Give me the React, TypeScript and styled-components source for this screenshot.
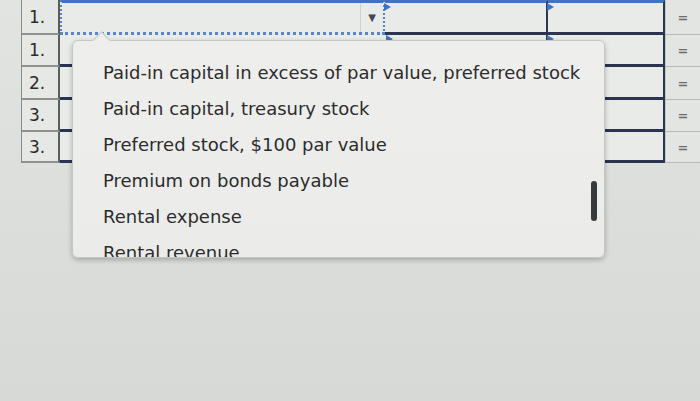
import React from 'react';
import styled, { createGlobalStyle, css } from 'styled-components';

const GlobalStyle = createGlobalStyle`
  html, body {
    margin: 0;
    padding: 0;
  }
  body {
    font-family: "DejaVu Sans", Verdana, sans-serif;
  }
`;

const NAVY = '#2b3450';
const BLUE = '#3f74c0';

const Page = styled.div`
  position: relative;
  width: 700px;
  height: 401px;
  overflow: hidden;
  background: linear-gradient(180deg, #e2e4e2 0%, #dcdfdc 45%, #d6d9d6 100%);
`;

const Sheet = styled.div`
  display: flex;
  flex-direction: column;
`;

const Row = styled.div<{ $h: number }>`
  display: grid;
  grid-template-columns: 22px 38px 325px 163px 117px 35px;
  height: ${(p) => p.$h}px;
`;

const Gutter = styled.div`
  border-right: 1px solid #8a8c8a;
`;

const NumCell = styled.div`
  display: flex;
  align-items: center;
  padding-left: 7px;
  background: #e6e8e6;
  border-bottom: 2px solid #8f918f;
  border-right: 2px solid #5a5c5e;
  font-size: 17px;
  color: #2a2a2a;
`;

const Cell = styled.div<{ $first?: boolean; $focus?: boolean; $edge?: boolean }>`
  position: relative;
  background: #e9ebe9;
  ${(p) =>
    p.$first
      ? css`
          border-top: 3px solid ${BLUE};
          border-bottom: 3px solid ${NAVY};
        `
      : css`
          border-bottom: 3px solid ${NAVY};
        `}
  ${(p) =>
    p.$focus &&
    css`
      border-left: 2px dotted #5b83c6;
      border-right: 2px dotted #5b83c6;
      border-bottom: 3px dotted #5b83c6;
      display: flex;
      justify-content: flex-end;
    `}
  ${(p) =>
    p.$edge &&
    css`
      border-right: 2px solid ${NAVY};
    `}
`;

const SplitCell = styled(Cell)`
  border-right: 2px solid ${NAVY};
`;

const ArrowBox = styled.div`
  width: 22px;
  display: flex;
  align-items: center;
  justify-content: center;
  border-left: 1px solid #cfd1cf;
  color: #445;
  font-size: 10px;
`;

const Marker = styled.span<{ $top?: boolean }>`
  position: absolute;
  right: -8px;
  ${(p) => (p.$top ? 'top: 0;' : 'bottom: -8px;')}
  width: 0;
  height: 0;
  border-top: 4px solid transparent;
  border-bottom: 4px solid transparent;
  border-left: 7px solid ${BLUE};
  z-index: 2;
`;

const EqCell = styled.div`
  display: flex;
  align-items: center;
  justify-content: center;
  background: #e3e5e3;
  border-bottom: 1px solid #b8bab8;
  border-left: 1px solid #c6c8c6;
  color: #6b6d6f;
  font-size: 13px;
  font-weight: bold;
`;

const Menu = styled.div`
  position: absolute;
  left: 72px;
  top: 40px;
  width: 533px;
  height: 218px;
  box-sizing: border-box;
  padding-top: 13px;
  background: linear-gradient(180deg, #eeeeec 0%, #ebebe9 100%);
  border: 1px solid #c5c7c5;
  border-radius: 6px;
  box-shadow: 0 2px 5px rgba(0, 0, 0, 0.25);
  z-index: 5;

  &::before {
    content: '';
    position: absolute;
    top: -7px;
    left: 22px;
    width: 12px;
    height: 12px;
    background: #eeeeec;
    border-left: 1px solid #c5c7c5;
    border-top: 1px solid #c5c7c5;
    transform: rotate(45deg);
  }
`;

const MenuList = styled.div`
  height: 100%;
  overflow: hidden;
  border-radius: 0 0 6px 6px;
`;

const Item = styled.div`
  height: 36px;
  display: flex;
  align-items: center;
  padding-left: 30px;
  font-size: 18px;
  color: #2c2c2c;
  white-space: nowrap;
`;

const Scroll = styled.div`
  position: absolute;
  right: 7px;
  top: 140px;
  width: 6px;
  height: 40px;
  border-radius: 3px;
  background: #38393a;
`;

const items = [
  'Paid-in capital in excess of par value, preferred stock',
  'Paid-in capital, treasury stock',
  'Preferred stock, $100 par value',
  'Premium on bonds payable',
  'Rental expense',
  'Rental revenue',
];

const rows = [
  { num: '1.', h: 32 },
  { num: '2.', h: 33 },
  { num: '3.', h: 32 },
  { num: '3.', h: 31 },
];

export default function App() {
  return (
    <Page>
      <GlobalStyle />
      <Sheet>
        <Row $h={35}>
          <Gutter />
          <NumCell>1.</NumCell>
          <Cell $first $focus>
            <ArrowBox>▼</ArrowBox>
            <Marker $top />
          </Cell>
          <SplitCell $first>
            <Marker $top />
          </SplitCell>
          <Cell $first $edge />
          <EqCell>=</EqCell>
        </Row>
        {rows.map((r, i) => (
          <Row key={i} $h={r.h}>
            <Gutter />
            <NumCell>{r.num}</NumCell>
            <Cell>{i === 0 && <Marker $top />}</Cell>
            <SplitCell>{i === 0 && <Marker $top />}</SplitCell>
            <Cell $edge />
            <EqCell>=</EqCell>
          </Row>
        ))}
      </Sheet>
      <Menu>
        <MenuList>
          {items.map((t) => (
            <Item key={t}>{t}</Item>
          ))}
        </MenuList>
        <Scroll />
      </Menu>
    </Page>
  );
}
